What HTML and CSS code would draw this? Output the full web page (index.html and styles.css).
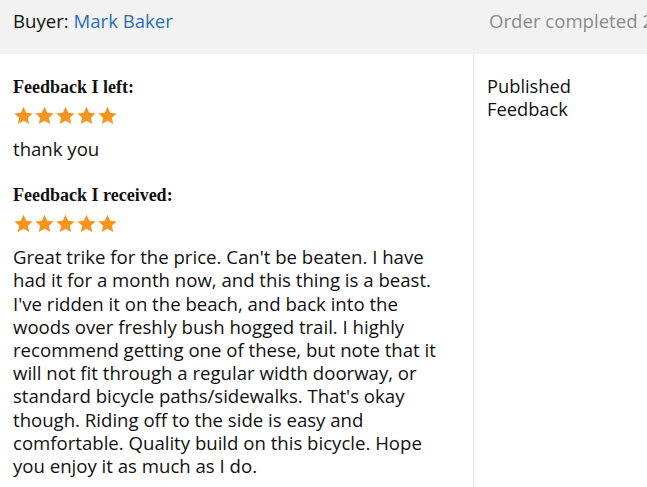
FILE: index.html
```html
<!DOCTYPE html>
<html lang="en">
<head>
    <meta charset="UTF-8">
    <title>Order feedback</title>
    <link rel="stylesheet" href="styles.css">
</head>
<body>

<div class="order-head">
    <div class="buyer">Buyer: <a href="#">Mark Baker</a></div>
    <div class="status">Order completed 2</div>
</div>

<div class="order-body">
    <div class="feedback">
        <h4>Feedback I left:</h4>
        <div class="stars">
            <svg viewBox="0 0 24 24"><path d="M12 1l3.3 7.1 7.7.8-5.8 5.2 1.7 7.6L12 17.8l-6.9 3.9 1.7-7.6L1 8.9l7.7-.8z"/></svg>
            <svg viewBox="0 0 24 24"><path d="M12 1l3.3 7.1 7.7.8-5.8 5.2 1.7 7.6L12 17.8l-6.9 3.9 1.7-7.6L1 8.9l7.7-.8z"/></svg>
            <svg viewBox="0 0 24 24"><path d="M12 1l3.3 7.1 7.7.8-5.8 5.2 1.7 7.6L12 17.8l-6.9 3.9 1.7-7.6L1 8.9l7.7-.8z"/></svg>
            <svg viewBox="0 0 24 24"><path d="M12 1l3.3 7.1 7.7.8-5.8 5.2 1.7 7.6L12 17.8l-6.9 3.9 1.7-7.6L1 8.9l7.7-.8z"/></svg>
            <svg viewBox="0 0 24 24"><path d="M12 1l3.3 7.1 7.7.8-5.8 5.2 1.7 7.6L12 17.8l-6.9 3.9 1.7-7.6L1 8.9l7.7-.8z"/></svg>
        </div>
        <p>thank you</p>

        <h4>Feedback I received:</h4>
        <div class="stars">
            <svg viewBox="0 0 24 24"><path d="M12 1l3.3 7.1 7.7.8-5.8 5.2 1.7 7.6L12 17.8l-6.9 3.9 1.7-7.6L1 8.9l7.7-.8z"/></svg>
            <svg viewBox="0 0 24 24"><path d="M12 1l3.3 7.1 7.7.8-5.8 5.2 1.7 7.6L12 17.8l-6.9 3.9 1.7-7.6L1 8.9l7.7-.8z"/></svg>
            <svg viewBox="0 0 24 24"><path d="M12 1l3.3 7.1 7.7.8-5.8 5.2 1.7 7.6L12 17.8l-6.9 3.9 1.7-7.6L1 8.9l7.7-.8z"/></svg>
            <svg viewBox="0 0 24 24"><path d="M12 1l3.3 7.1 7.7.8-5.8 5.2 1.7 7.6L12 17.8l-6.9 3.9 1.7-7.6L1 8.9l7.7-.8z"/></svg>
            <svg viewBox="0 0 24 24"><path d="M12 1l3.3 7.1 7.7.8-5.8 5.2 1.7 7.6L12 17.8l-6.9 3.9 1.7-7.6L1 8.9l7.7-.8z"/></svg>
        </div>
        <p>Great trike for the price. Can't be beaten. I have had it for a month now, and this thing is a beast. I've ridden it on the beach, and back into the woods over freshly bush hogged trail. I highly recommend getting one of these, but note that it will not fit through a regular width doorway, or standard bicycle paths/sidewalks. That's okay though. Riding off to the side is easy and comfortable. Quality build on this bicycle. Hope you enjoy it as much as I do.</p>
    </div>
    <div class="side">
        Published<br>Feedback
    </div>
</div>

</body>
</html>
```

FILE: styles.css
```css
body {
    margin: 0;
    font-family: "Open Sans", Arial, sans-serif;
    font-size: 18.6px;
    color: #111;
    background-color: #fff;
    overflow: hidden;
}
.order-head {
    display: flex;
    background-color: #f2f2f2;
    height: 54px;
    padding: 8px 0 0 13px;
    box-sizing: border-box;
    white-space: nowrap;
    overflow: hidden;
}
.buyer {
    flex: 0 0 476px;
}
.order-head a {
    color: #2a6ebb;
    text-decoration: none;
}
.status {
    color: #8a8a8a;
}
.order-body {
    display: flex;
    min-height: 433px;
}
.feedback {
    width: 474px;
    box-sizing: border-box;
    padding: 23px 22px 0 13px;
    border-right: 1px solid #e6e6e6;
}
.feedback h4 {
    font-family: "Liberation Serif", "Times New Roman", serif;
    font-size: 18px;
    font-weight: bold;
    margin: 0;
    line-height: 20px;
}
.stars {
    display: flex;
    margin: 9px 0 11px 0;
}
.stars svg {
    width: 21px;
    height: 20px;
    fill: #f7941d;
}
.feedback p {
    margin: 0 0 25px 0;
    line-height: 23.2px;
}
.side {
    padding: 20px 0 0 13px;
    font-size: 18.3px;
    line-height: 23px;
}
```
